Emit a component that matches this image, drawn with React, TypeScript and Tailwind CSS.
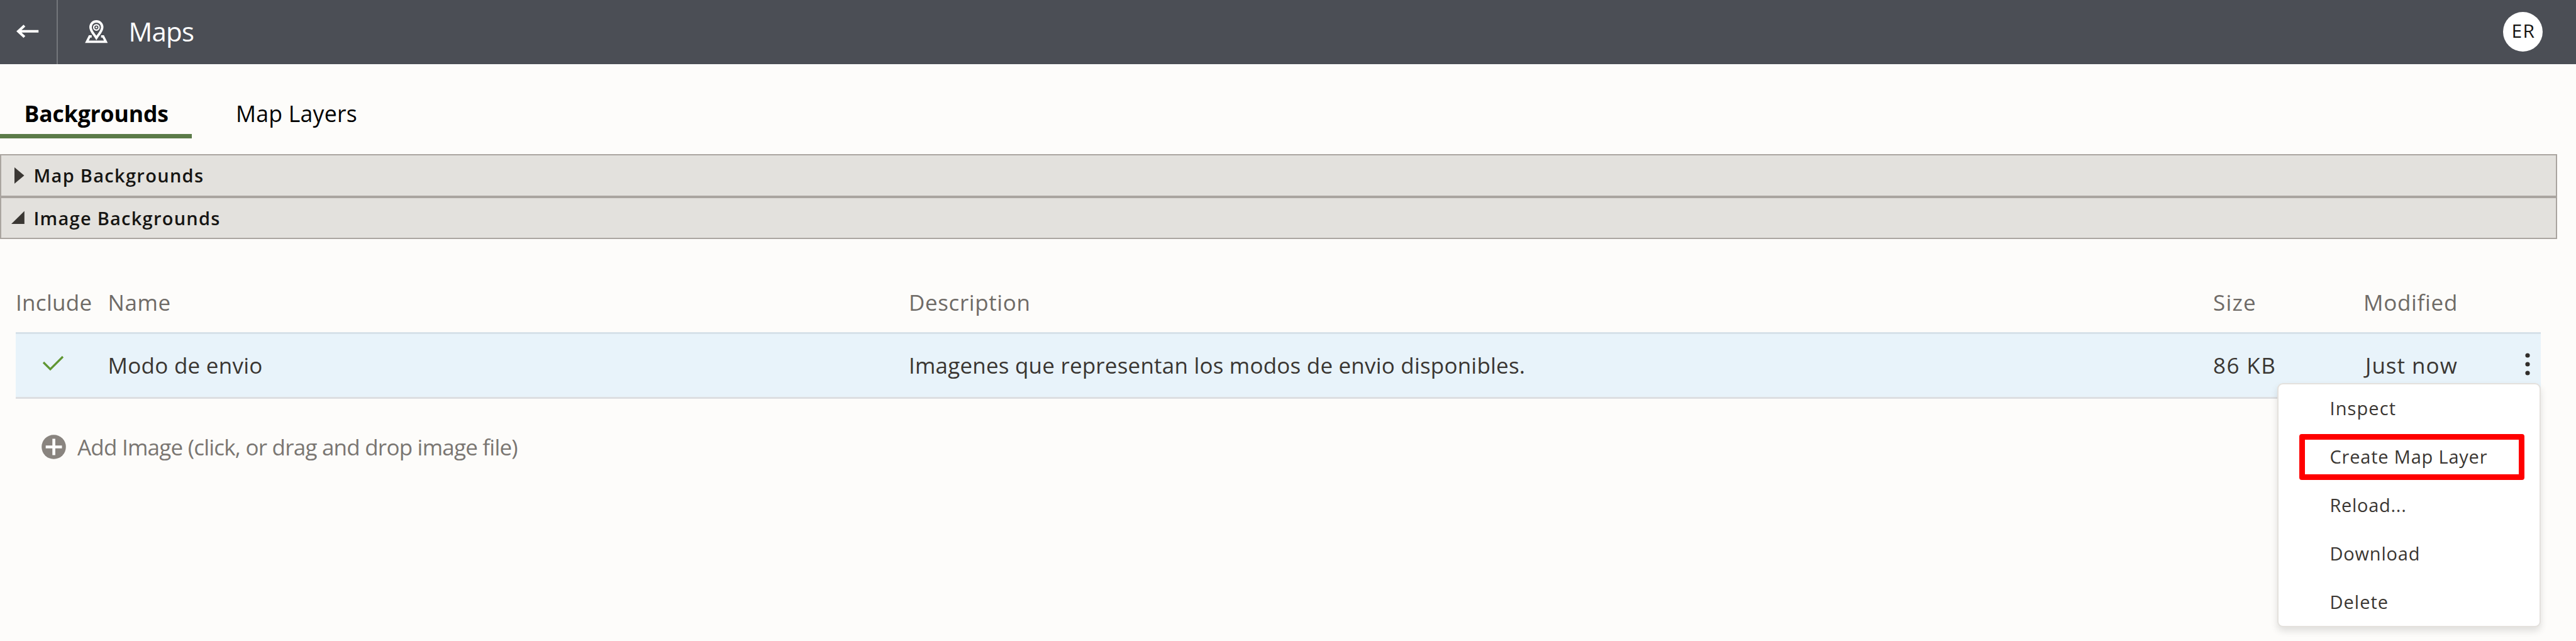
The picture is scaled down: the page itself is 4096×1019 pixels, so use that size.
const COLUMNS = "grid grid-cols-[146.5px_1273.5px_2074px_239px_1fr] items-center whitespace-nowrap";

function BackArrow() {
  return (
    <svg viewBox="25 38 45 32" className="ml-[23px] h-[30px] w-[42px]" fill="none" stroke="#fff" strokeWidth="4.4">
      <path d="M66 53.7H31M42 44l-10.5 9.7L42 63.5" strokeLinejoin="miter" />
    </svg>
  );
}

function MapPinIcon() {
  return (
    <svg viewBox="140 28.7 50 50" className="ml-[38px] h-[46.5px] w-[46.5px]" fill="none" stroke="#fff">
      <path d="M165 64.5C161 58 155 53 155 46.2a10 10 0 0 1 20 0C175 53 169 58 165 64.5z" strokeWidth="4.2" />
      <circle cx="165" cy="46.5" r="4.6" strokeWidth="2.4" />
      <circle cx="165" cy="46.5" r="1.5" fill="#fff" stroke="none" />
      <path d="M157 61.8h-3.6l-4.6 9.2h32.4l-4.6-9.2H173" strokeWidth="4" />
    </svg>
  );
}

function Header() {
  return (
    <header className="flex h-[102px] items-center bg-[#4b4e55] pr-[53px] text-white">
      <div className="flex h-full w-[92px] items-center border-r-2 border-[#73767b] pb-[2px]">
        <BackArrow />
      </div>
      <div className="flex flex-1 items-center pb-[2px]">
        <MapPinIcon />
        <h1 className="ml-[28px] text-[42px] leading-[60px] tracking-[-0.8px]">Maps</h1>
      </div>
      <div className="mb-[2px] flex size-[63px] items-center justify-center rounded-full bg-white pb-[3px] pl-[2px] text-[30px] leading-none tracking-[1.5px] text-[#161513]">
        ER
      </div>
    </header>
  );
}

function Tabs() {
  return (
    <nav className="flex h-[143px] items-start pt-[45px] text-[35.6px] leading-[66px] text-black">
      <div className="w-[305px] border-b-[7px] border-[#5b7b48] pl-[38.5px] font-bold tracking-[-0.15px]">Backgrounds</div>
      <div className="pl-[70px] tracking-[0.25px]">Map Layers</div>
    </nav>
  );
}

function Accordion() {
  return (
    <div className="w-[4066px] text-[29px] font-semibold leading-[40px] text-[#161513]">
      <div className="flex h-[68px] items-center border-2 border-[#aaa5a0] bg-[#e3e1dd]">
        <svg viewBox="0 0 50 40" className="h-[40px] w-[50px]" fill="#3a3733">
          <path d="M21 7L36.5 20L21 33z" />
        </svg>
        <span className="pl-[1.5px] tracking-[1.3px]">Map Backgrounds</span>
      </div>
      <div className="flex h-[67px] items-center border-2 border-[#aaa5a0] bg-[#e3e1dd]">
        <svg viewBox="0 0 50 40" className="h-[40px] w-[50px]" fill="#3a3733">
          <path d="M16 29H36.8V8.5z" />
        </svg>
        <span className="pl-[1.5px] tracking-[1.25px]">Image Backgrounds</span>
      </div>
    </div>
  );
}

function ImageTable() {
  return (
    <section className="ml-[25px] mt-[54px] w-[4015px] text-[35px] leading-[48px]">
      <div className={`${COLUMNS} h-[94px] text-[#6f6b67]`}>
        <span className="tracking-[0.3px]">Include</span>
        <span className="tracking-[0.6px]">Name</span>
        <span className="tracking-[0.6px]">Description</span>
        <span className="tracking-[1.2px]">Size</span>
        <span className="tracking-[0.7px]">Modified</span>
      </div>
      <div className={`${COLUMNS} h-[106px] border-y-[3px] border-b-[#dddfe1] border-t-[#d6e1e9] bg-[#e8f3fa] text-[#3a3632]`}>
        <svg viewBox="0 0 40 40" className="ml-[40px] size-[40px]" fill="none" stroke="#5f9632" strokeWidth="3.2">
          <path d="M4 15L15 26L35 6" />
        </svg>
        <span className="tracking-[0.26px]">Modo de envio</span>
        <span className="tracking-[0.2px]">Imagenes que representan los modos de envio disponibles.</span>
        <span className="tracking-[1.4px]">86 KB</span>
        <div className="flex items-center justify-between pl-[3px] pr-[11px]">
          <span className="tracking-[1px]">Just now</span>
          <svg viewBox="0 0 20 40" className="h-[40px] w-[20px]" fill="#312d2a">
            <circle cx="10" cy="4" r="3.6" />
            <circle cx="10" cy="18" r="3.6" />
            <circle cx="10" cy="32" r="3.6" />
          </svg>
        </div>
      </div>
      <div className="mt-[42px] flex h-[70px] items-center pl-[41px] text-[#7a7672]">
        <svg viewBox="0 0 39 39" className="mb-[2px] mr-[18px] size-[39px]" fill="none">
          <circle cx="19.5" cy="19.5" r="19.3" fill="#89847f" />
          <path d="M6.7 19.5h25.8M19.6 6.6v26" stroke="#fff" strokeWidth="4.6" />
        </svg>
        <span className="tracking-[-0.78px] [font-variant-ligatures:none]">Add Image (click, or drag and drop image file)</span>
      </div>
    </section>
  );
}

function ContextMenu() {
  const item = "flex h-[76.8px] items-center pl-[81.5px]";
  return (
    <div className="absolute left-[3623px] top-[611px] w-[415px] rounded-[7px] bg-white text-[29px] leading-[40px] text-[#3a3632] shadow-[0_0_0_2px_#e4e1dd,0_6px_12px_2px_rgba(0,0,0,0.12)]">
      <div className={`${item} tracking-[1.1px]`}>Inspect</div>
      <div className={`${item} tracking-[0.8px]`}>Create Map Layer</div>
      <div className={`${item} tracking-[0.7px]`}>Reload...</div>
      <div className={`${item} tracking-[0.8px]`}>Download</div>
      <div className={`${item} tracking-[1px]`}>Delete</div>
      <div className="absolute left-[32.5px] top-[78.5px] h-[73px] w-[358.5px] rounded-[4px] border-[9px] border-[#ff0000]" />
    </div>
  );
}

export default function App() {
  return (
    <div className="relative h-[1019px] w-[4096px] overflow-hidden bg-[#fdfcfa] font-['Open_Sans','Noto_Sans',sans-serif]">
      <Header />
      <Tabs />
      <Accordion />
      <ImageTable />
      <ContextMenu />
    </div>
  );
}
